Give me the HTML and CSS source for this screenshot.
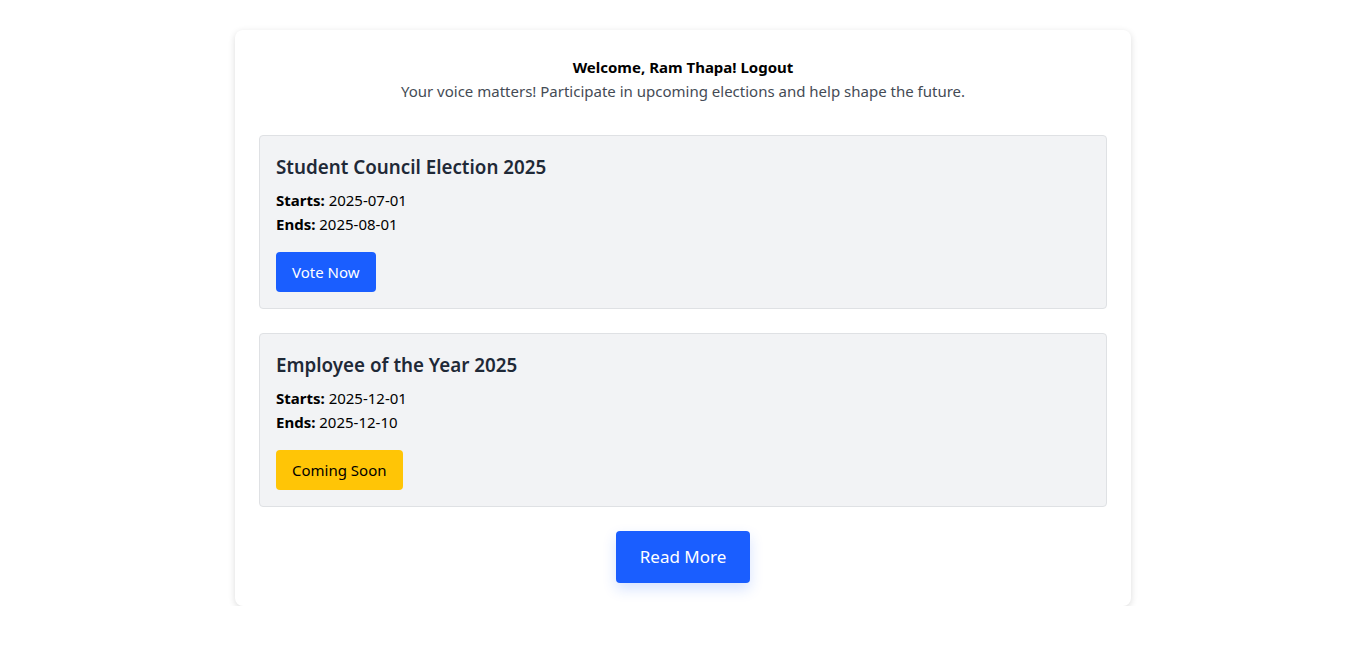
FILE: index.html
```html
<!DOCTYPE html>
<html lang="en">
<head>
<meta charset="utf-8">
<title>Elections</title>
<link rel="stylesheet" href="styles.css">
</head>
<body>
<main class="panel">
  <header class="intro">
    <div class="welcome">Welcome, Ram Thapa! <a class="logout" href="#">Logout</a></div>
    <p class="tagline">Your voice matters! Participate in upcoming elections and help shape the future.</p>
  </header>

  <section class="election">
    <h3 class="election-title">Student Council Election 2025</h3>
    <p class="date"><strong>Starts:</strong> 2025-07-01</p>
    <p class="date"><strong>Ends:</strong> 2025-08-01</p>
    <a class="btn btn-blue" href="#">Vote Now</a>
  </section>

  <section class="election">
    <h3 class="election-title">Employee of the Year 2025</h3>
    <p class="date"><strong>Starts:</strong> 2025-12-01</p>
    <p class="date"><strong>Ends:</strong> 2025-12-10</p>
    <span class="btn btn-yellow">Coming Soon</span>
  </section>

  <div class="more">
    <a class="btn-more" href="#">Read More</a>
  </div>
</main>
</body>
</html>
```

FILE: styles.css
```css
* { box-sizing: border-box; }

html, body {
  margin: 0;
  padding: 0;
  background: #ffffff;
}

body {
  font-family: "Noto Sans", "Open Sans", sans-serif;
  font-size: 15px;
  line-height: 24px;
  color: #212529;
  padding-top: 30px;
}

.panel {
  width: 896px;
  margin: 0 auto;
  background: #fff;
  border-radius: 8px;
  box-shadow: 0 2px 7px rgba(0, 0, 0, 0.14);
  padding: 25px 24px 23px;
}

.intro {
  text-align: center;
  margin-bottom: 32px;
}

.welcome {
  font-weight: 700;
  color: #000;
}

.logout {
  color: #000;
  text-decoration: none;
}

.tagline {
  margin: 0;
  color: #444b55;
}

.election {
  background: #f2f3f5;
  border: 1px solid #dfe1e4;
  border-radius: 4px;
  padding: 16px;
  margin-bottom: 24px;
}

.election-title {
  margin: 1px 0 7px;
  font-size: 18.8px;
  line-height: 28px;
  font-weight: 600;
  color: #1f2937;
}

.date {
  margin: 0;
  color: #000;
}

.date strong { font-weight: 700; }

.btn {
  display: inline-block;
  margin-top: 16px;
  height: 40px;
  line-height: 40px;
  padding: 0 16px;
  border-radius: 4px;
  text-decoration: none;
  font-size: 15px;
}

.btn-blue {
  background: #1a5eff;
  color: #fff;
}

.btn-yellow {
  background: #ffc506;
  color: #000;
}

.more {
  display: flex;
  justify-content: center;
}

.btn-more {
  display: inline-block;
  height: 52px;
  line-height: 52px;
  padding: 0 24px;
  background: #1a5eff;
  color: #fff;
  font-size: 17px;
  border-radius: 4px;
  text-decoration: none;
  box-shadow: 0 6px 14px rgba(26, 94, 255, 0.18);
}
```
